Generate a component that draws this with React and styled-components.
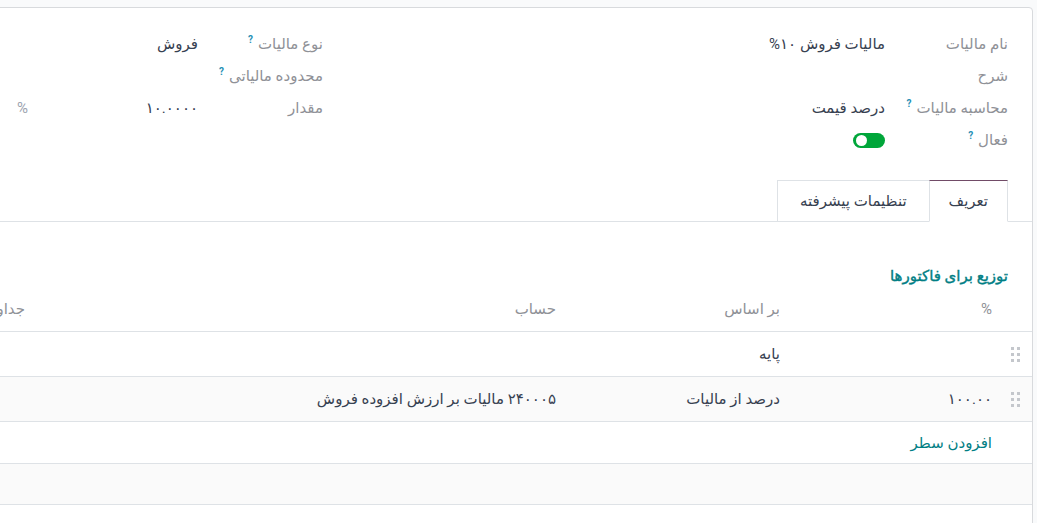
import React from 'react';
import styled, { createGlobalStyle } from 'styled-components';

const GlobalStyle = createGlobalStyle`
  html, body {
    margin: 0;
    padding: 0;
    height: 100%;
    overflow: hidden;
    background: #f9fafb;
  }
  body {
    font-family: Roboto, "DejaVu Sans", sans-serif;
    font-size: 15px;
    color: #374151;
  }
`;

const Page = styled.div`
  direction: rtl;
  padding: 7px 4px 0 0;
  height: 100vh;
  box-sizing: border-box;
`;

const Sheet = styled.div`
  width: 1418px;
  min-height: 540px;
  box-sizing: border-box;
  background: #fff;
  border: 1px solid #d8dadd;
  border-radius: 4px;
  padding-top: 20px;
`;

const Groups = styled.div`
  display: grid;
  grid-template-columns: 685px 685px;
  padding: 0 24px;
`;

const Group = styled.div`
  display: grid;
  grid-template-columns: ${p => p.$labelWidth}px 1fr;
  grid-auto-rows: 32px;
  align-items: center;
`;

const Label = styled.div`
  color: #8f9197;
  white-space: nowrap;
  display: flex;
  align-items: center;
`;

const Help = styled.sup`
  color: #1f8fb5;
  font-size: 10px;
  font-weight: 700;
  margin-right: 5px;
  align-self: flex-start;
  margin-top: -1px;
`;

const Value = styled.div`
  color: #374151;
  white-space: nowrap;
`;

const AmountField = styled.div`
  display: flex;
  align-items: center;
`;

const Amount = styled.span`
  width: 170px;
  color: #374151;
`;

const Suffix = styled.span`
  color: #9ca3af;
`;

const Toggle = styled.div`
  width: 32px;
  height: 15px;
  border-radius: 8px;
  background: #00a63a;
  position: relative;
  &::after {
    content: '';
    position: absolute;
    left: 3px;
    top: 2px;
    width: 11px;
    height: 11px;
    border-radius: 50%;
    background: #fff;
  }
`;

const TabBar = styled.div`
  display: flex;
  margin-top: 24px;
  padding: 0 24px;
  border-bottom: 1px solid #dee2e6;
`;

const Tab = styled.div`
  height: 42px;
  box-sizing: border-box;
  display: flex;
  align-items: center;
  padding: 0 ${p => (p.$active ? 19 : 22)}px;
  margin-bottom: -1px;
  margin-right: ${p => (p.$first ? 0 : -1)}px;
  border: 1px solid #dee2e6;
  border-top-color: ${p => (p.$active ? '#714b67' : '#dee2e6')};
  border-bottom-color: ${p => (p.$active ? '#fff' : '#dee2e6')};
  background: #fff;
  color: #374151;
  position: relative;
  z-index: ${p => (p.$active ? 1 : 0)};
  white-space: nowrap;
`;

const Content = styled.div`
  padding-top: 44px;
`;

const SectionTitle = styled.div`
  padding: 0 24px;
  height: 20px;
  line-height: 20px;
  color: #017e84;
  font-weight: 400;
  -webkit-text-stroke: 0.4px #017e84;
`;

const Table = styled.table`
  width: 100%;
  border-collapse: collapse;
  table-layout: fixed;
  margin-top: 1px;
`;

const Th = styled.th`
  height: 44px;
  padding: 0 8px;
  text-align: right;
  font-weight: 400;
  color: #8f9197;
  border-bottom: 1px solid #dee2e6;
  white-space: nowrap;
  overflow: hidden;
`;

const Row = styled.tr`
  background: ${p => (p.$striped ? '#fafafa' : '#fff')};
`;

const Td = styled.td`
  height: ${p => p.$h || 44}px;
  padding: 0 8px;
  text-align: right;
  color: #374151;
  border-bottom: 1px solid #dee2e6;
  white-space: nowrap;
  overflow: hidden;
`;

const AddLine = styled.span`
  color: #017e84;
`;

const HandleCell = styled.td`
  height: 44px;
  padding: 0;
  text-align: center;
  border-bottom: 1px solid #dee2e6;
  svg {
    display: block;
    margin: 0 auto;
    position: relative;
    left: -1px;
  }
`;

const Handle = () => (
  <svg width="9" height="15" viewBox="0 0 9 15">
    {[0, 6, 12].map(y =>
      [0, 6].map(x => (
        <rect key={`${x}-${y}`} x={x} y={y} width="3" height="3" fill="#c4c7cc" />
      ))
    )}
  </svg>
);

const App = () => (
  <>
    <GlobalStyle />
    <Page>
      <Sheet>
        <Groups>
          <Group $labelWidth={123}>
            <Label>نام مالیات</Label>
            <Value>مالیات فروش ۱۰%</Value>
            <Label>شرح</Label>
            <Value />
            <Label>محاسبه مالیات<Help>?</Help></Label>
            <Value>درصد قیمت</Value>
            <Label>فعال<Help>?</Help></Label>
            <Value><Toggle /></Value>
          </Group>
          <Group $labelWidth={125}>
            <Label>نوع مالیات<Help>?</Help></Label>
            <Value>فروش</Value>
            <Label>محدوده مالیاتی<Help>?</Help></Label>
            <Value />
            <Label>مقدار</Label>
            <AmountField>
              <Amount>۱۰.۰۰۰۰</Amount>
              <Suffix>%</Suffix>
            </AmountField>
          </Group>
        </Groups>

        <TabBar>
          <Tab $active $first>تعریف</Tab>
          <Tab>تنظیمات پیشرفته</Tab>
        </TabBar>

        <Content>
          <SectionTitle>توزیع برای فاکتورها</SectionTitle>
          <Table>
            <colgroup>
              <col style={{ width: 32 }} />
              <col style={{ width: 212 }} />
              <col style={{ width: 224 }} />
              <col style={{ width: 531 }} />
              <col />
            </colgroup>
            <thead>
              <tr>
                <Th />
                <Th>%</Th>
                <Th>بر اساس</Th>
                <Th>حساب</Th>
                <Th>جداول مالیاتی</Th>
              </tr>
            </thead>
            <tbody>
              <Row>
                <HandleCell><Handle /></HandleCell>
                <Td />
                <Td>پایه</Td>
                <Td />
                <Td />
              </Row>
              <Row $striped>
                <HandleCell><Handle /></HandleCell>
                <Td>۱۰۰.۰۰</Td>
                <Td>درصد از مالیات</Td>
                <Td>۲۴۰۰۰۵ مالیات بر ارزش افزوده فروش</Td>
                <Td />
              </Row>
              <Row>
                <Td $h={41} />
                <Td $h={41}><AddLine>افزودن سطر</AddLine></Td>
                <Td $h={41} />
                <Td $h={41} />
                <Td $h={41} />
              </Row>
              <Row $striped>
                <Td $h={40} />
                <Td $h={40} />
                <Td $h={40} />
                <Td $h={40} />
                <Td $h={40} />
              </Row>
              <Row>
                <Td $h={40} />
                <Td $h={40} />
                <Td $h={40} />
                <Td $h={40} />
                <Td $h={40} />
              </Row>
            </tbody>
          </Table>
        </Content>
      </Sheet>
    </Page>
  </>
);

export default App;
